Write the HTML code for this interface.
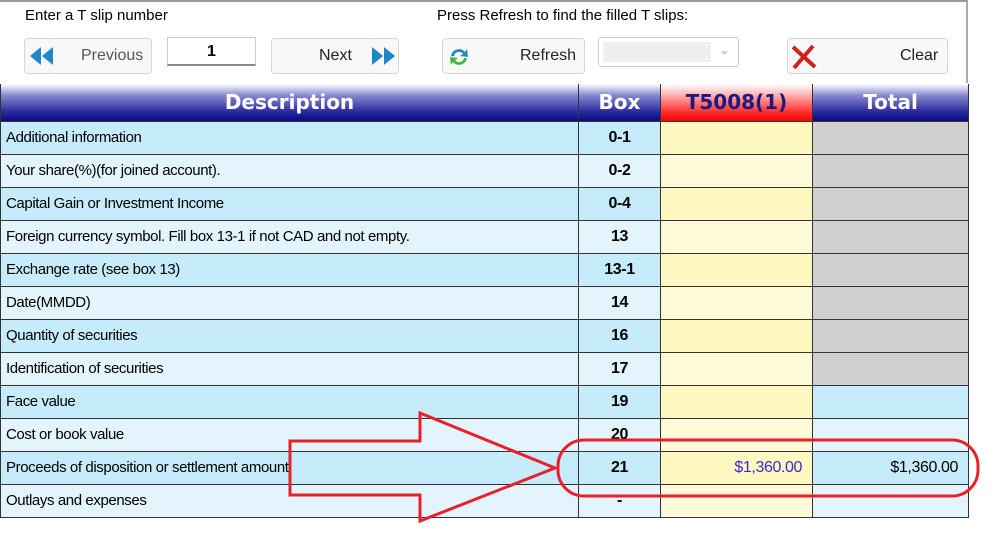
<!DOCTYPE html>
<html><head><style>
body{margin:0;width:994px;height:542px;background:#fff;font-family:"Liberation Sans",sans-serif;position:relative;overflow:hidden}
.a{position:absolute}
.btn{position:absolute;border:1px solid #d6d6d6;border-radius:4px;background:#f8f8f8;font-size:16px;color:#222;box-sizing:border-box}
table{position:absolute;left:0;top:84px;border-collapse:collapse;table-layout:fixed}
td,th{border:1.5px solid #333;height:33px;padding:0;font-size:15px;box-sizing:border-box;letter-spacing:-0.4px}
th{height:37px;color:#fff;font-size:20px;letter-spacing:0;font-family:"DejaVu Sans",sans-serif;background:linear-gradient(#fff 0%,#8a8ad0 30%,#2a2aa0 75%,#0a0a80 100%);border-top:none}
th.r{background:linear-gradient(#fff 0%,#ffb0b0 30%,#ff3030 75%,#ff0000 100%);color:#1a1a80}
td.d{padding-left:5px}
td.b{text-align:center;font-weight:bold;font-size:16px}
tr.o td{background:#c6ecfc} tr.e td{background:#e4f4fc}
tr.o td.y{background:#fff8c0} tr.e td.y{background:#fffad8}
td.g{background:#d0d0d0!important}
td.n{text-align:right;padding-right:10px;font-size:16px}
</style></head><body>
<div class="a" style="left:0;top:0;width:968px;height:83px;border-top:2px solid #999;border-right:2px solid #aaa;box-sizing:border-box"></div>
<div class="a" style="left:25px;top:7px;font-size:15px">Enter a T slip number</div>
<div class="a" style="left:437px;top:7px;font-size:15px">Press Refresh to find the filled T slips:</div>
<div class="btn" style="left:24px;top:38px;width:128px;height:36px">
<svg class="a" style="left:3px;top:6px" width="28" height="22"><polygon points="13,2 2,11 13,20" fill="#1e88c8"/><polygon points="25,2 14,11 25,20" fill="#1e88c8"/></svg>
<span class="a" style="left:56px;top:8px;color:#555">Previous</span></div>
<div class="a" style="left:167px;top:37px;width:89px;height:29px;border:1px solid #ccc;border-bottom:2px solid #888;box-sizing:border-box;text-align:center;font-weight:bold;font-size:16px;line-height:27px">1</div>
<div class="btn" style="left:271px;top:38px;width:128px;height:36px">
<span class="a" style="left:47px;top:8px">Next</span>
<svg class="a" style="left:98px;top:6px" width="28" height="22"><polygon points="2,2 13,11 2,20" fill="#1e88c8"/><polygon points="14,2 25,11 14,20" fill="#1e88c8"/></svg></div>
<div class="btn" style="left:442px;top:38px;width:143px;height:36px">
<svg class="a" style="left:4px;top:6px" width="24" height="24"><path d="M4 11 A8 8 0 0 1 18 7 L20 4 L21 12 L13 11 L16 9 A5 5 0 0 0 7 11Z" fill="#1e88c8"/><path d="M20 13 A8 8 0 0 1 6 17 L4 20 L3 12 L11 13 L8 15 A5 5 0 0 0 17 13Z" fill="#3cb83c"/></svg>
<span class="a" style="left:77px;top:8px">Refresh</span></div>
<div class="a" style="left:598px;top:37px;width:141px;height:30px;border:1px solid #ccc;border-radius:3px;box-sizing:border-box"><div class="a" style="left:4px;top:4px;width:108px;height:20px;background:#efefef"></div><span class="a" style="left:120px;top:4px;color:#aaa;font-size:13px">&#8964;</span></div>
<div class="btn" style="left:787px;top:38px;width:161px;height:36px">
<svg class="a" style="left:2px;top:5px" width="28" height="26"><path d="M3 3 L25 23 M23 2 L4 24" stroke="#d02020" stroke-width="4"/></svg>
<span class="a" style="left:112px;top:8px">Clear</span></div>
<table style="width:968px">
<colgroup><col style="width:578px"><col style="width:82px"><col style="width:152px"><col style="width:156px"></colgroup>
<tr><th>Description</th><th>Box</th><th class="r">T5008(1)</th><th>Total</th></tr>
<tr class="o"><td class="d">Additional information</td><td class="b">0-1</td><td class="y"></td><td class="g"></td></tr>
<tr class="e"><td class="d">Your share(%)(for joined account).</td><td class="b">0-2</td><td class="y"></td><td class="g"></td></tr>
<tr class="o"><td class="d">Capital Gain or Investment Income</td><td class="b">0-4</td><td class="y"></td><td class="g"></td></tr>
<tr class="e"><td class="d">Foreign currency symbol. Fill box 13-1 if not CAD and not empty.</td><td class="b">13</td><td class="y"></td><td class="g"></td></tr>
<tr class="o"><td class="d">Exchange rate (see box 13)</td><td class="b">13-1</td><td class="y"></td><td class="g"></td></tr>
<tr class="e"><td class="d">Date(MMDD)</td><td class="b">14</td><td class="y"></td><td class="g"></td></tr>
<tr class="o"><td class="d">Quantity of securities</td><td class="b">16</td><td class="y"></td><td class="g"></td></tr>
<tr class="e"><td class="d">Identification of securities</td><td class="b">17</td><td class="y"></td><td class="g"></td></tr>
<tr class="o"><td class="d">Face value</td><td class="b">19</td><td class="y"></td><td></td></tr>
<tr class="e"><td class="d">Cost or book value</td><td class="b">20</td><td class="y"></td><td></td></tr>
<tr class="o"><td class="d">Proceeds of disposition or settlement amount</td><td class="b">21</td><td class="y n" style="color:#3a2ad0">$1,360.00</td><td class="n">$1,360.00</td></tr>
<tr class="e"><td class="d">Outlays and expenses</td><td class="b">-</td><td class="y"></td><td></td></tr>
</table>
<svg class="a" style="left:0;top:0" width="994" height="542">
<polygon points="290,441 420,441 420,413 555,468 420,521 420,495 290,495" fill="none" stroke="#e8202a" stroke-width="3"/>
<rect x="558" y="440" width="420" height="56" rx="26" ry="26" fill="none" stroke="#e8202a" stroke-width="3"/>
</svg>
</body></html>
